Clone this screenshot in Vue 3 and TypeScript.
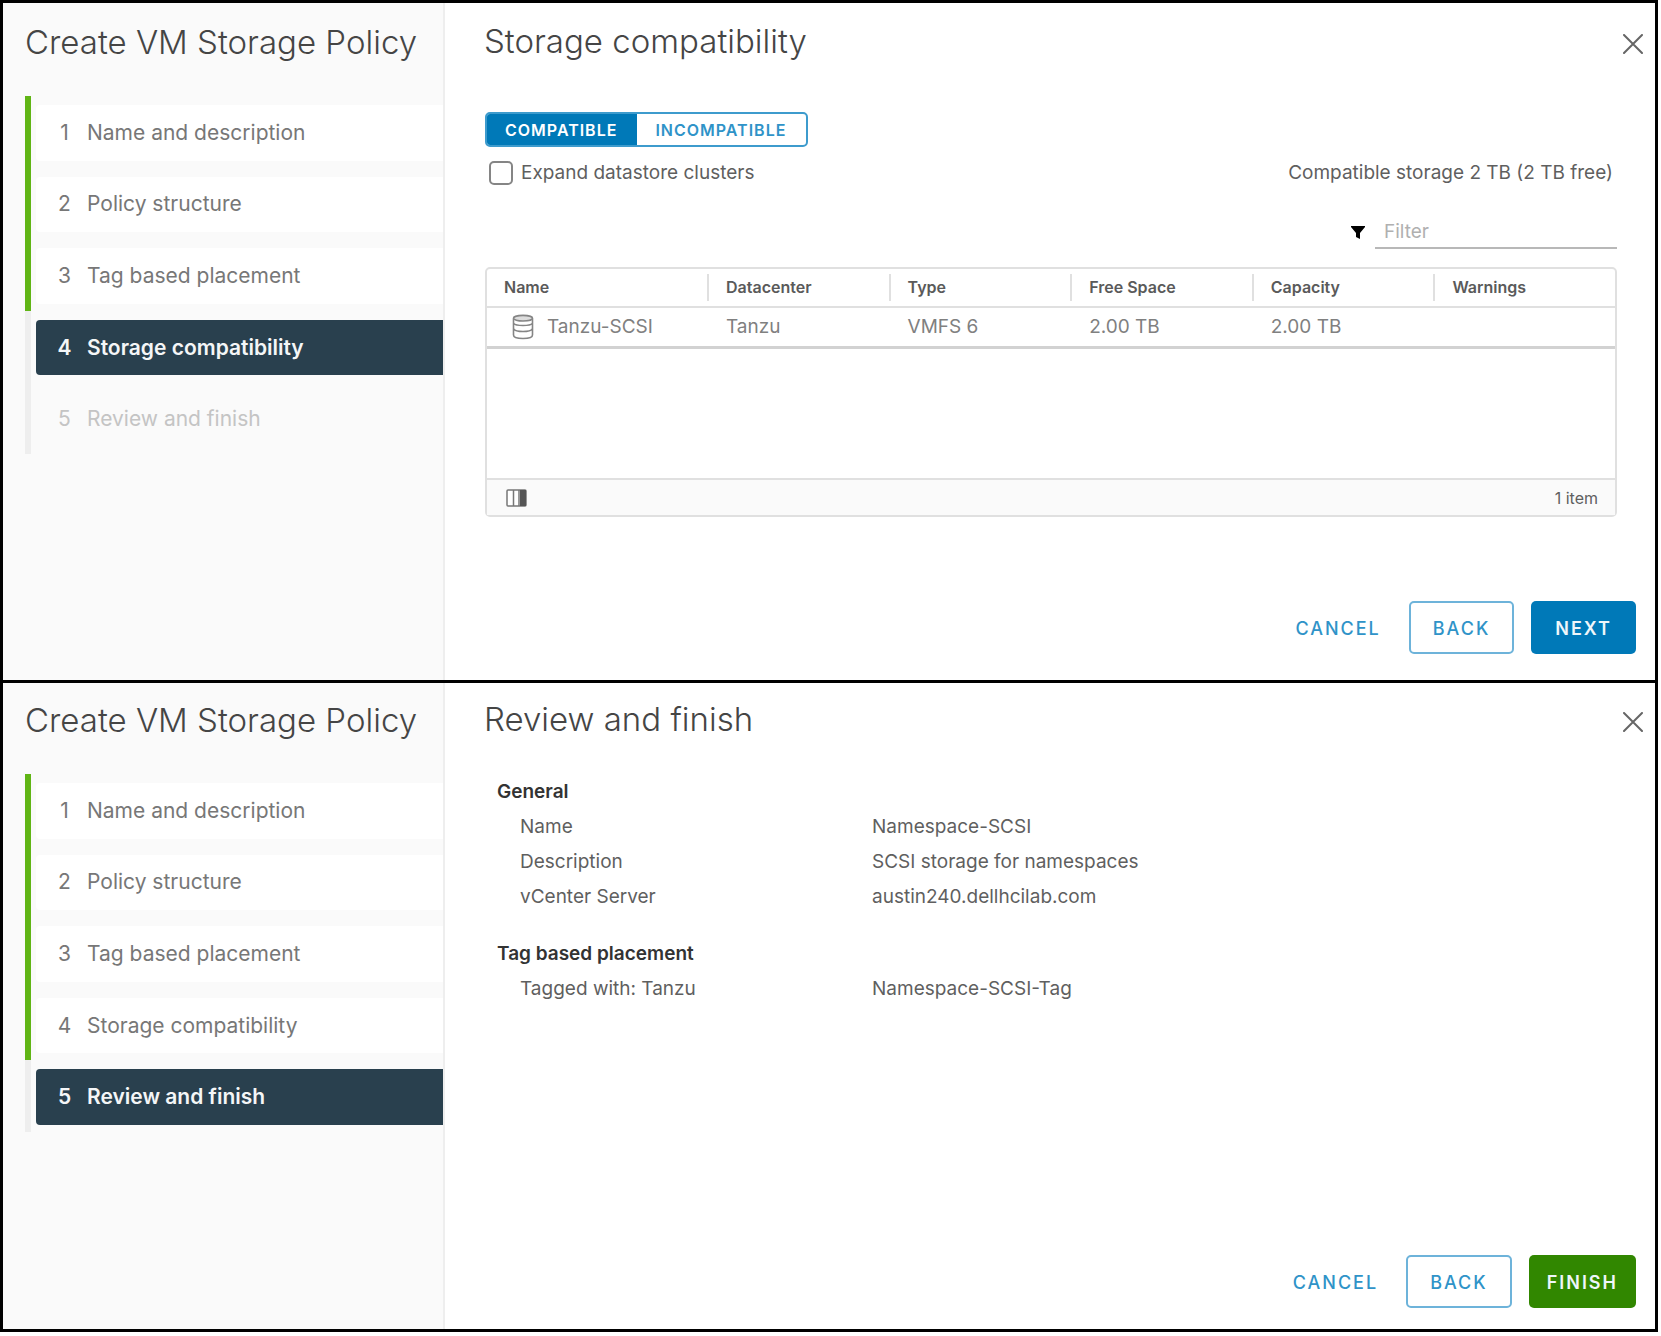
<script setup lang="ts">
import { ref } from 'vue'

type StepState = 'done' | 'current' | 'pending'

interface Step {
  title: string
  state: StepState
}

interface Datastore {
  name: string
  datacenter: string
  type: string
  freeSpace: string
  capacity: string
  warnings: string
}

interface Wizard {
  id: 'storage' | 'review'
  heading: string
  submit: string
  steps: Step[]
}

const stepTitles = [
  'Name and description',
  'Policy structure',
  'Tag based placement',
  'Storage compatibility',
  'Review and finish',
]

function stepsAt(current: number): Step[] {
  return stepTitles.map((title, i) => ({
    title,
    state: i < current ? 'done' : i === current ? 'current' : 'pending',
  }))
}

const wizards: Wizard[] = [
  { id: 'storage', heading: 'Storage compatibility', submit: 'NEXT', steps: stepsAt(3) },
  { id: 'review', heading: 'Review and finish', submit: 'FINISH', steps: stepsAt(4) },
]

const columns = ['Name', 'Datacenter', 'Type', 'Free Space', 'Capacity', 'Warnings']

const datastores: Datastore[] = [
  {
    name: 'Tanzu-SCSI',
    datacenter: 'Tanzu',
    type: 'VMFS 6',
    freeSpace: '2.00 TB',
    capacity: '2.00 TB',
    warnings: '',
  },
]

const summary = [
  {
    title: 'General',
    rows: [
      ['Name', 'Namespace-SCSI'],
      ['Description', 'SCSI storage for namespaces'],
      ['vCenter Server', 'austin240.dellhcilab.com'],
    ],
  },
  {
    title: 'Tag based placement',
    rows: [['Tagged with: Tanzu', 'Namespace-SCSI-Tag']],
  },
]

const view = ref<'compatible' | 'incompatible'>('compatible')
const expandClusters = ref(false)
const filter = ref('')
</script>

<template>
  <div class="stack">
    <section v-for="w in wizards" :key="w.id" class="wizard" :class="w.id">
      <aside class="sidebar">
        <h1 class="heading">Create VM Storage Policy</h1>
        <ol class="steps">
          <li v-for="(s, i) in w.steps" :key="s.title" class="step" :class="s.state">
            <button type="button" class="step-button" :disabled="s.state === 'pending'">
              <span class="step-number">{{ i + 1 }}</span>
              <span>{{ s.title }}</span>
            </button>
          </li>
        </ol>
      </aside>

      <div class="main">
        <header class="main-header">
          <h2 class="heading">{{ w.heading }}</h2>
          <button type="button" class="close" aria-label="Close">
            <svg viewBox="0 0 20 20" width="20" height="20" aria-hidden="true">
              <path d="M1 1 19 19M19 1 1 19" fill="none" stroke="#666" stroke-width="2" stroke-linecap="round" />
            </svg>
          </button>
        </header>

        <div v-if="w.id === 'storage'" class="content">
          <div class="toggle">
            <button type="button" :class="{ on: view === 'compatible' }" @click="view = 'compatible'">COMPATIBLE</button>
            <button type="button" :class="{ on: view === 'incompatible' }" @click="view = 'incompatible'">INCOMPATIBLE</button>
          </div>

          <div class="options">
            <label class="check">
              <input v-model="expandClusters" type="checkbox" />
              <span>Expand datastore clusters</span>
            </label>
            <span>Compatible storage 2 TB (2 TB free)</span>
          </div>

          <div class="filter">
            <svg viewBox="0 0 14 14" width="14" height="14" aria-hidden="true">
              <path d="M0 1H14V2L9 8V14L5 12V8L0 2Z" fill="#000" />
            </svg>
            <input v-model="filter" type="text" placeholder="Filter" aria-label="Filter" />
          </div>

          <div class="grid">
            <table>
              <thead>
                <tr>
                  <th v-for="c in columns" :key="c" scope="col"><span>{{ c }}</span></th>
                </tr>
              </thead>
              <tbody>
                <tr v-for="d in datastores" :key="d.name">
                  <td>
                    <span class="name-cell">
                      <svg viewBox="0 0 22 26" width="22" height="26" aria-hidden="true">
                        <g fill="none" stroke="#858585" stroke-width="1.6">
                          <path d="M1.500 4.500V21C1.500 23.500 5.500 24.500 11 24.500S20.500 23.500 20.500 21V4.500" />
                          <ellipse cx="11" cy="4.200" rx="9.500" ry="2.800" fill="#ddd" />
                          <path d="M1.500 9.500C3 11 6 11.500 11 11.500S19 11 20.500 9.500M1.500 15C3 17 6 17.500 11 17.500S19 17 20.500 15" />
                        </g>
                      </svg>
                      {{ d.name }}
                    </span>
                  </td>
                  <td>{{ d.datacenter }}</td>
                  <td>{{ d.type }}</td>
                  <td>{{ d.freeSpace }}</td>
                  <td>{{ d.capacity }}</td>
                  <td>{{ d.warnings }}</td>
                </tr>
              </tbody>
            </table>
            <footer class="grid-footer">
              <button type="button" class="columns" aria-label="Show columns">
                <svg viewBox="0 0 21 18" width="21" height="18" aria-hidden="true">
                  <rect x="1" y="1" width="19" height="16" rx="1" fill="#fff" stroke="#777" stroke-width="1.500" />
                  <path d="M7.500 1V17M13 1V17" stroke="#777" stroke-width="1.500" />
                  <path d="M14 1H20V17H14Z" fill="#555" />
                </svg>
              </button>
              <span>1 item</span>
            </footer>
          </div>
        </div>

        <div v-else class="content summary">
          <section v-for="g in summary" :key="g.title">
            <h3>{{ g.title }}</h3>
            <dl>
              <div v-for="r in g.rows" :key="r[0]">
                <dt>{{ r[0] }}</dt>
                <dd>{{ r[1] }}</dd>
              </div>
            </dl>
          </section>
        </div>

        <footer class="actions">
          <button type="button" class="action link">CANCEL</button>
          <button type="button" class="action outline">BACK</button>
          <button type="button" class="action solid">{{ w.submit }}</button>
        </footer>
      </div>
    </section>
  </div>
</template>

<style>
body {
  margin: 0;
  background: #fff;
}
</style>

<style scoped>
.stack {
  margin-right: 3px;
  border: 3px solid #000;
  font-family: Inter, "Open Sans", sans-serif;
  font-size: 19px;
  line-height: 24px;
  color: #5f5f5f;
}
.stack * {
  box-sizing: border-box;
}
button,
input {
  margin: 0;
  padding: 0;
  border: 0;
  background: none;
  font: inherit;
  color: inherit;
}
.wizard {
  display: flex;
  min-height: 677px;
}
.wizard.review {
  min-height: 649px;
  border-top: 3px solid #000;
}

/* Sidebar */
.sidebar {
  flex: none;
  width: 442px;
  padding: 19px 0 0 22px;
  border-right: 2px solid #eee;
  background: #fafafa;
}
.review .sidebar {
  padding-top: 17px;
}
.heading {
  margin: 0;
  font-size: 33px;
  font-weight: 300;
  line-height: 40px;
  color: #454545;
  white-space: nowrap;
}
.steps {
  display: flex;
  flex-direction: column;
  height: 358px;
  margin: 34px 0 0;
  padding: 0;
  list-style: none;
}
.step {
  display: flex;
  flex: 1;
  padding: 9px 0 7px 5px;
  border-left: 6px solid #eee;
}
.step.done {
  border-left-color: #60b515;
}
.step-button {
  display: flex;
  flex: 1;
  align-items: center;
  gap: 15px;
  padding-left: 21px;
  border-radius: 4px 0 0 4px;
  font-size: 21px;
  text-align: left;
  color: #777;
}
.step-number {
  width: 15px;
  text-align: center;
}
.done .step-button {
  background: #fff;
}
.current .step-button {
  background: #29404e;
  font-weight: 600;
  color: #f4f6f7;
}
.pending .step-button {
  color: #c4c4c4;
}

/* Main pane */
.main {
  display: flex;
  flex: 1;
  flex-direction: column;
  min-width: 0;
}
.main-header {
  display: flex;
  justify-content: space-between;
  padding: 18px 12px 0 39px;
}
.review .main-header {
  padding-top: 16px;
}
.close {
  width: 20px;
  height: 20px;
  margin-top: 13px;
}
.close svg,
.columns svg {
  display: block;
}
.content {
  flex: 1;
  padding: 51px 38px 0 40px;
}
.toggle {
  display: flex;
  width: max-content;
  height: 35px;
  border: 2px solid #3d9bcd;
  border-radius: 5px;
  overflow: hidden;
}
.toggle button {
  padding: 0 20px 0 18px;
  font-size: 16px;
  font-weight: 600;
  letter-spacing: 1px;
  color: #2f93c8;
}
.toggle button.on {
  background: #0079b8;
  color: #fff;
}
.options {
  display: flex;
  align-items: center;
  justify-content: space-between;
  padding: 14px 4px 0;
}
.check {
  display: flex;
  align-items: center;
  gap: 8px;
}
.check input {
  width: 24px;
  height: 24px;
  border: 2px solid #858585;
  border-radius: 5px;
  background: #fff;
  appearance: none;
}
.check input:checked {
  background: #0079b8;
}
.filter {
  display: flex;
  align-items: center;
  justify-content: flex-end;
  gap: 10px;
  margin-top: 30px;
}
.filter input {
  width: 242px;
  height: 34px;
  padding: 0 9px;
  border-bottom: 2px solid #b8b8b8;
}
.filter input::placeholder {
  color: #b0b0b0;
}
.grid {
  display: flex;
  flex-direction: column;
  min-height: 250px;
  margin-top: 18px;
  border: 2px solid #e0e0e0;
  border-radius: 5px;
}
table {
  width: 100%;
  table-layout: fixed;
  border-collapse: collapse;
}
th,
td {
  padding: 0 0 0 19px;
  text-align: left;
  white-space: nowrap;
}
th {
  height: 38px;
  padding: 5px 0;
  border-bottom: 2px solid #e0e0e0;
  font-size: 16px;
  font-weight: 600;
  color: #5a5a5a;
}
th:first-child {
  width: 220px;
}
th span {
  display: block;
  padding-left: 17px;
  border-left: 2px solid #e0e0e0;
  line-height: 27px;
}
th:first-child span {
  border-left: 0;
}
td {
  height: 40px;
  border-bottom: 3px solid #d2d2d2;
  color: #808080;
}
td:first-child {
  padding-left: 25px;
}
.name-cell {
  display: flex;
  align-items: center;
  gap: 13px;
}
.grid-footer {
  display: flex;
  align-items: center;
  justify-content: space-between;
  height: 37px;
  margin-top: auto;
  padding: 0 17px 0 19px;
  border-top: 2px solid #e0e0e0;
  background: #fafafa;
  font-size: 16px;
}

/* Review summary */
.summary {
  padding: 35px 38px 0 52px;
}
.summary section + section {
  margin-top: 22px;
}
.summary h3 {
  margin: 0;
  font-size: 19px;
  font-weight: 600;
  line-height: 35px;
  color: #333;
}
.summary dl {
  margin: 0;
}
.summary dl div {
  display: flex;
  padding-left: 23px;
  line-height: 35px;
}
.summary dt {
  width: 352px;
}
.summary dd {
  margin: 0;
}

/* Actions */
.actions {
  display: flex;
  justify-content: flex-end;
  gap: 17px;
  padding: 0 19px 26px;
}
.review .actions {
  padding-bottom: 21px;
}
.action {
  height: 53px;
  padding: 2px 22px 0;
  border: 2px solid transparent;
  border-radius: 5px;
  font-size: 18px;
  font-weight: 500;
  letter-spacing: 2px;
}
.link {
  padding: 2px 9px 0;
  color: #2f93c8;
}
.outline {
  border-color: #6db3da;
  color: #2f93c8;
}
.solid {
  background: #0079b8;
  font-weight: 600;
  color: #eef6fa;
}
.review .solid {
  padding: 2px 16px 0;
  background: #318700;
}
</style>
